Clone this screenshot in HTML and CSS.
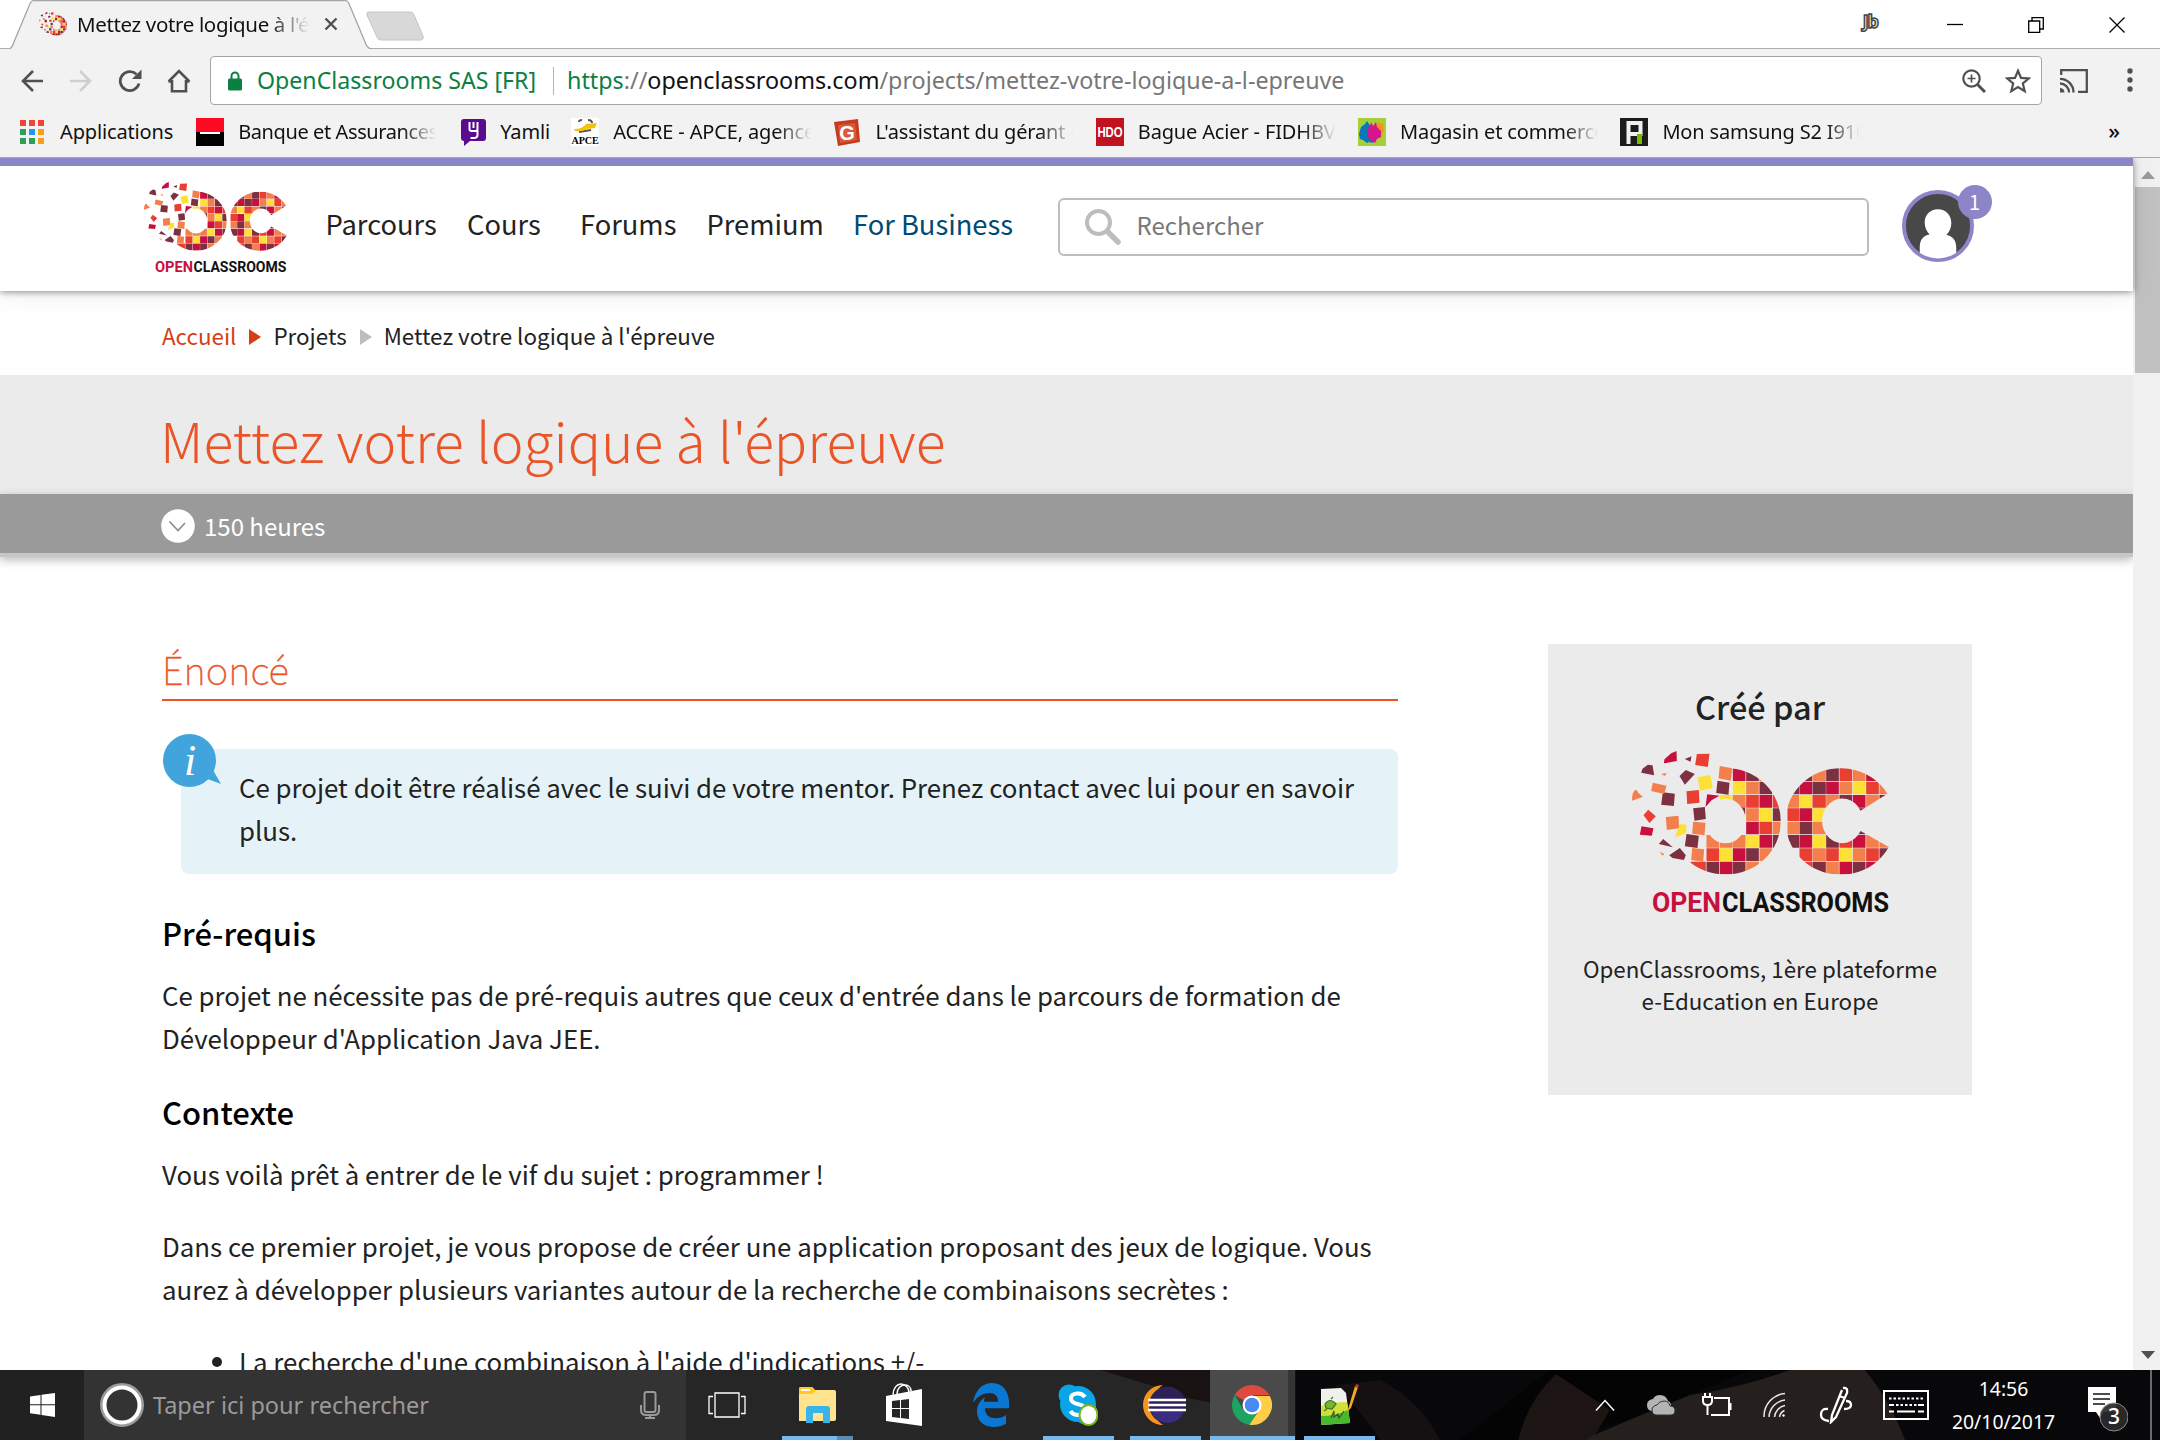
FILE: index.html
```html
<!DOCTYPE html>
<html lang="fr">
<head>
<meta charset="utf-8">
<title>Mettez votre logique à l'épreuve</title>
<link rel="stylesheet" href="styles.css">
</head>
<body>
<svg class="defs" width="0" height="0">
  <defs>
    <clipPath id="oShape"><path clip-rule="evenodd" d="M389 548a166 160 0 1 0 332 0a166 160 0 1 0-332 0zM494 547a61 67 0 1 0 122 0a61 67 0 1 0-122 0z"/></clipPath>
    <clipPath id="cShape"><path d="M1041 465A165 160 0 1 0 1045 625L960 577A61 67 0 1 1 960 516z"/></clipPath>
    <symbol id="oc-mark" viewBox="275 337 770 372">
      <g clip-path="url(#oShape)" stroke-width="38" fill="none">
        <path stroke="#c8103e" d="M577 408h38M657 488h38M617 568h38M657 608h38M577 648h38M538 688h38"/>
        <path stroke="#7d3040" d="M617 408h38M657 448h38M498 688h38M577 688h38M617 648h38M697 528h28M697 608h28M600 509h14"/>
        <path stroke="#ffe136" d="M577 448h38M538 488h38M657 528h38M617 608h38M538 648h38"/>
        <path stroke="#f37f4d" d="M617 448h38M577 488h38M498 608h38M538 608h38M577 608h38M617 528h38M697 568h28M657 648h38M617 688h38M657 408h38"/>
        <path stroke="#e93f32" d="M617 488h38M697 488h28M657 568h38M498 648h38M450 688h46"/>
      </g>
      <g clip-path="url(#cShape)" stroke-width="38" fill="none">
        <path stroke="#c8103e" d="M977 408h38M777 448h38M857 448h38M937 488h38M777 528h38M777 608h38M937 608h38M897 688h38M977 688h38"/>
        <path stroke="#7d3040" d="M777 408h38M857 408h38M741 448h35M816 448h40M897 488h38M1017 488h38M937 528h38M777 568h38M741 608h35M857 608h38M937 568h38M816 688h40M937 688h38M1017 648h38"/>
        <path stroke="#f37f4d" d="M816 408h40M937 408h38M897 448h38M1017 448h38M741 488h35M857 488h38M977 488h38M741 568h35M816 568h40M977 608h38M1017 608h38M816 648h40M937 648h38M857 688h38"/>
        <path stroke="#ffe136" d="M937 448h38M777 488h38M816 528h40M816 608h40M897 648h38"/>
        <path stroke="#e93f32" d="M897 408h38M977 448h38M816 488h40M741 528h35M897 608h38M777 648h38M857 648h38M977 648h38M777 688h38"/>
      </g>
      <path fill="#c8103e" d="M370 372l2-10 20-18 16-7 1 30-36 7zM500 467l37 4-24 14-18 20zM303 563l36 6-5 22-36-3z"/>
      <path fill="#7d3040" d="M302 402l4-12 16-12 14 2 5 30zM433 361l20-8-3 16zM436 394l27 12-30 32-16-26zM367 461l36 4-3 37-38-4zM531 426l36 6-3 36-37-5zM458 509l35-4 3 36-34 5zM438 586l37 5-4 37-38-5zM368 601l29 25-42-10zM418 628l18 22-6 14-34-6-10-8z"/>
      <path fill="#e93f32" d="M469 346l38-1-5 40-38-6zM438 458l37-4 2 38-37 4zM323 513l23 20-19 20-18-23z"/>
      <path fill="#f37f4d" d="M538 382l37 7-4 37-37-7zM337 432l41 9-7 25-39-9zM283 454q8-2 10 8l14 12-32 12q-2-20 8-32zM362 406l17-3-6 9zM376 535l38-4 2 38-37 5zM458 549l37 3-3 38-37-5zM455 628l36 4-3 37-36-5zM357 639l14 7-5 5z"/>
      <path fill="#ffe136" d="M471 416l38-7 8 39-38 8zM418 556l20 2-2 25-33 14z"/>
    </symbol>
  </defs>
</svg>

<header class="browser">
  <div class="tabstrip">
    <div class="tab">
      <svg class="tab-bg" width="362" height="50" viewBox="0 0 362 50"><path d="M0 49Q3 46 4 42L19 6Q21 0 25 .5H334Q338 0 340 6L355 42Q357 48 361 49" fill="#f2f2f2" stroke="#a5a5a5" stroke-width="1.3"/><path d="M0 49.6h362" stroke="#f2f2f2"/></svg>
      <svg class="tab-icon" width="28" height="24" viewBox="275 340 446 370" preserveAspectRatio="none"><use href="#oc-mark" x="275" y="337" width="770" height="372"/></svg>
      <span class="tab-title fade">Mettez votre logique à l'épreuve</span>
      <svg class="tab-close" width="14" height="14" viewBox="0 0 14 14"><path d="M1.500 1.500l11 11M12.500 1.500l-11 11" stroke="#505050" stroke-width="2.400"/></svg>
    </div>
    <svg class="newtab" width="60" height="30" viewBox="0 0 60 30"><path d="M3 1H44q3 0 4 3l9 21q1 4-3 4H15q-3 0-4-3L1 4q-1-3 2-3z" fill="#d8d8d8" stroke="#c4c4c4"/></svg>
    <div class="window-buttons">
      <span class="profile">Jb</span>
      <svg width="16" height="16" viewBox="0 0 16 16"><path d="M0 7.500h16" stroke="#000" stroke-width="1.300"/></svg>
      <svg width="16" height="16" viewBox="0 0 16 16" fill="none" stroke="#000" stroke-width="1.300"><path d="M.7 4h11v11.300h-11zM4 4V.7h11.300V12h-3.500"/></svg>
      <svg width="16" height="16" viewBox="0 0 16 16"><path d="M.5.5l15 15M15.500.5l-15 15" stroke="#000" stroke-width="1.300"/></svg>
    </div>
  </div>
  <div class="toolbar">
    <div class="nav-buttons">
      <svg width="24" height="24" viewBox="0 0 24 24" fill="none" stroke="#505050" stroke-width="2.600"><path d="M23 12H3M13 2L3 12l10 10"/></svg>
      <svg width="24" height="24" viewBox="0 0 24 24" fill="none" stroke="#cfcfcf" stroke-width="2.600"><path d="M1 12h20M11 2l10 10-10 10"/></svg>
      <svg width="24" height="24" viewBox="0 0 24 24"><path d="M21 14.500A9.500 9.500 0 1 1 18.500 5.300" fill="none" stroke="#505050" stroke-width="2.800"/><path d="M23.500.5V10h-9.500z" fill="#505050"/></svg>
      <svg width="24" height="24" viewBox="0 0 24 24" fill="none" stroke="#505050" stroke-width="2.600"><path d="M5 11v11.200h14V11M1.500 12.500h3.500M22.500 12.500H19M1.600 12.500L12 2l10.400 10.500"/></svg>
    </div>
    <div class="omnibox">
      <svg width="14" height="20" viewBox="0 0 14 20"><path d="M3.500 8V5a3.500 3.500 0 0 1 7 0v3" fill="none" stroke="#0b8043" stroke-width="2"/><rect y="7.500" width="14" height="12" rx="1.500" fill="#0b8043"/></svg>
      <span class="issuer">OpenClassrooms SAS [FR]</span>
      <span class="url"><span class="secure">https</span>://<span class="host">openclassrooms.com</span>/projects/mettez-votre-logique-a-l-epreuve</span>
      <svg class="zoom" width="24" height="24" viewBox="0 0 24 24" fill="none" stroke="#505050"><circle cx="9.500" cy="9.500" r="8.200" stroke-width="2.200"/><path d="M15.500 15.500l7.500 7.500" stroke-width="3"/><path d="M9.500 5.500v8M5.500 9.500h8" stroke-width="1.700"/></svg>
      <svg class="star" width="26" height="26" viewBox="0 0 26 26"><path d="M13 2.800l3 7.100 7.700.6-5.900 5 1.900 7.600-6.700-4.100-6.700 4.100 1.900-7.600-5.900-5 7.700-.6z" fill="none" stroke="#505050" stroke-width="2.200"/></svg>
    </div>
    <svg class="cast" width="28" height="24" viewBox="0 0 28 24" fill="none" stroke="#505050" stroke-width="2.300"><path d="M1.200 6V1.200h25.600v21.600H18M0 9.800A13.500 13.500 0 0 1 13.500 23.500M0 14.500a9 9 0 0 1 9 9"/><path d="M0 19a4.500 4.500 0 0 1 4.500 4.500H0z" fill="#505050" stroke="none"/></svg>
    <svg class="menu" width="6" height="24" viewBox="0 0 6 24" fill="#505050"><circle cx="3" cy="3" r="2.700"/><circle cx="3" cy="12" r="2.700"/><circle cx="3" cy="21" r="2.700"/></svg>
  </div>
  <div class="bookmarks">
    <div class="bookmark apps">
      <svg width="24" height="24" viewBox="0 0 24 24"><path fill="#f44336" d="M0 0h6v6H0zM9 0h6v6H9zM18 0h6v6h-6z"/><path fill="#2e9e5b" d="M0 9h6v6H0zM0 18h6v6H0zM9 18h6v6H9z"/><path fill="#2196f3" d="M9 9h6v6H9z"/><path fill="#f9a01b" d="M18 9h6v6h-6zM18 18h6v6h-6z"/></svg>
      <span>Applications</span>
    </div>
    <div class="bookmark bank">
      <svg width="28" height="28" viewBox="0 0 28 28"><path fill="#ff0a24" d="M0 0h28v14H0z"/><path d="M0 14h28v14H0z"/><path stroke="#fff" stroke-width="2" d="M4 15h20"/></svg>
      <span class="fade">Banque et Assurances</span>
    </div>
    <div class="bookmark short">
      <svg width="25" height="28" viewBox="0 0 25 28"><path fill="#5a0a8c" d="M3 1h19q3 0 3 3v16q0 3-3 3H9l-6 5V23q-3 0-3-3V4q0-3 3-3z"/><path d="M8.500 4v7q0 2 2 2h4q2 0 2-2V4M12.500 4v6M16.500 12v5q0 3-4 3h-3" fill="none" stroke="#fff" stroke-width="2"/></svg>
      <span>Yamli</span>
    </div>
    <div class="bookmark">
      <svg width="28" height="28" viewBox="0 0 28 28"><path fill="#fff" d="M0 0h28v28H0z"/><path d="M8 4q0-2 3-2M17 2q4 0 4 3M8 14l12-2" stroke="#555" stroke-width="2" fill="none"/><path d="M3 11q9 0 12-5l11-1-2 5-8 1q-4 3-12 2z" fill="#f4c20d"/><text x="14" y="26" text-anchor="middle" textLength="27" lengthAdjust="spacingAndGlyphs" class="ico-serif">APCE</text></svg>
      <span class="fade">ACCRE - APCE, agence</span>
    </div>
    <div class="bookmark">
      <svg width="28" height="28" viewBox="0 0 28 28"><path d="M1 4L25 1l2 23-22 4z" fill="#c63a1e"/><path d="M5 7l17-2 2 17-17 3z" fill="#d95a38"/><text x="14" y="22" text-anchor="middle" class="ico-g">G</text></svg>
      <span class="fade">L'assistant du gérant de</span>
    </div>
    <div class="bookmark">
      <svg width="28" height="28" viewBox="0 0 28 28"><path fill="#c1121f" d="M0 0h28v28H0z"/><text x="14" y="19" text-anchor="middle" textLength="25" lengthAdjust="spacingAndGlyphs" class="ico-hdo">HDO</text></svg>
      <span class="fade">Bague Acier - FIDHBVA</span>
    </div>
    <div class="bookmark">
      <svg width="28" height="28" viewBox="0 0 28 28"><path fill="#a6cf38" d="M0 0h28v28H0z"/><path d="M18 8l2-4 3 2 2-1 1 7-3 8-6-2z" fill="#f7941d"/><path d="M1 16l2-7 4-3 2-3 2 3 4 4v15l-4-1-2 1-4-3-3-1z" fill="#0b76bc"/><path d="M9 12l3-4 1-4 2 4 3-4 1 5 4 4 0 6-4 2-2 4-5-3-3-4z" fill="#d6158c"/></svg>
      <span class="fade">Magasin et commerce</span>
    </div>
    <div class="bookmark">
      <svg width="28" height="28" viewBox="0 0 28 28"><path fill="#1c1c1c" d="M0 0h28v28H0z"/><path d="M8.500 26V5h12v11h-10" fill="none" stroke="#f0f0f0" stroke-width="4"/><path fill="#7ab800" d="M17 16h5v10h-5z"/></svg>
      <span class="fade">Mon samsung S2 I9100</span>
    </div>
    <span class="overflow">»</span>
  </div>
</header>

<div class="viewport">
  <div class="page">
    <header class="site-header">
      <div class="logo small"><svg width="143" height="69"><use href="#oc-mark" width="143" height="69"/></svg><svg width="143" height="21" viewBox="0 0 143 21"><text x="11" y="20.500" textLength="38" lengthAdjust="spacingAndGlyphs" class="word open">OPEN</text><text x="49.500" y="20.500" textLength="93" lengthAdjust="spacingAndGlyphs" class="word">CLASSROOMS</text></svg></div>
      <nav class="site-nav"><a>Parcours</a><a>Cours</a><a>Forums</a><a>Premium</a><a class="business">For Business</a></nav>
      <div class="search"><svg width="36" height="36" viewBox="0 0 36 36" fill="none" stroke="#bdbdbd"><circle cx="13.500" cy="13.500" r="11.500" stroke-width="4"/><path d="M22.500 22.500l10.500 10.500" stroke-width="5.500" stroke-linecap="round"/></svg><span>Rechercher</span></div>
      <div class="avatar"><svg width="72" height="72" viewBox="0 0 73 73"><clipPath id="av"><circle cx="36.500" cy="36.500" r="33"/></clipPath><circle cx="36.500" cy="36.500" r="34.500" fill="#484848" stroke="#8c86c8" stroke-width="4"/><path clip-path="url(#av)" fill="#fff" d="M36.500 19.500c8 0 13.500 6 13.500 14 0 5-2 9-5 12 7 1 10 6 10 13v12H18V58c0-7 3-12 10-13-3-3-5-7-5-12 0-8 5.500-13.500 13.500-13.500z"/></svg><span class="count">1</span></div>
    </header>
    <div class="crumbs"><a class="home">Accueil</a><i class="arrow red"></i><a>Projets</a><i class="arrow"></i><span>Mettez votre logique à l'épreuve</span></div>
    <div class="title-band"><h1>Mettez votre logique à l'épreuve</h1></div>
    <div class="duration"><svg width="34" height="34" viewBox="0 0 34 34"><circle cx="17" cy="17" r="16.800" fill="#fff"/><path d="M8.500 12.500l8.500 9 7-7.500" fill="none" stroke="#8a8a8a" stroke-width="1.600"/></svg><span>150 heures</span></div>
    <div class="content">
      <main>
        <h2>Énoncé</h2>
        <div class="info">
          <svg class="bubble" width="59" height="54" viewBox="0 0 59 54"><circle cx="26.500" cy="26.500" r="26.500" fill="#41a4dc"/><path d="M42 44l16 6-8-14z" fill="#41a4dc"/><text x="27" y="41" text-anchor="middle" class="i">i</text></svg>
          Ce projet doit être réalisé avec le suivi de votre mentor. Prenez contact avec lui pour en savoir plus.
        </div>
        <h3>Pré-requis</h3>
        <p>Ce projet ne nécessite pas de pré-requis autres que ceux d'entrée dans le parcours de formation de Développeur d'Application Java JEE.</p>
        <h3 class="next">Contexte</h3>
        <p>Vous voilà prêt à entrer de le vif du sujet : programmer !</p>
        <p class="more">Dans ce premier projet, je vous propose de créer une application proposant des jeux de logique. Vous aurez à développer plusieurs variantes autour de la recherche de combinaisons secrètes :</p>
        <ul><li>La recherche d'une combinaison à l'aide d'indications +/-</li></ul>
      </main>
      <aside>
        <h4>Créé par</h4>
        <div class="logo"><svg width="257" height="124"><use href="#oc-mark" width="257" height="124"/></svg><svg width="257" height="38" viewBox="0 0 257 38"><text x="20" y="37" textLength="69" lengthAdjust="spacingAndGlyphs" class="word open">OPEN</text><text x="90" y="37" textLength="167" lengthAdjust="spacingAndGlyphs" class="word">CLASSROOMS</text></svg></div>
        <p>OpenClassrooms, 1ère plateforme<br>e-Education en Europe</p>
      </aside>
    </div>
  </div>
  <div class="scrollbar">
    <svg width="14" height="8" viewBox="0 0 14 8"><path d="M0 8l7-8 7 8z" fill="#9b9b9b"/></svg>
    <div class="thumb"></div>
    <svg class="down" width="14" height="8" viewBox="0 0 14 8"><path d="M0 0l7 8 7-8z" fill="#505050"/></svg>
  </div>
</div>

<footer class="taskbar">
  <svg class="wallpaper" width="2160" height="70" viewBox="0 0 2160 70"><path fill="#262626" d="M0 0h1160v70H0z"/><path fill="#191213" d="M1100 0h260l50 70h-230l-20-52z"/><path fill="#262626" d="M1088 0q60 22 120 32 40 20 60 38h-180z"/><path fill="#08080a" d="M1296 0h864v70h-864z"/><path fill="#151011" d="M1335 15q30 30 45 55h60q-20-40-60-60z"/><path fill="#040405" d="M1460 70l90-70h200l-120 50-80 20z"/><path fill="#1d1514" d="M1518 70q10-40 38-66l54 36-18 30z"/><path fill="#251f1d" d="M1592 66Q1640 45 1690 25 1740 18 1790 0h75q25 30 40 70H1585z"/></svg>
  <div class="start"><svg width="25" height="24" viewBox="0 0 25 24" fill="#fff"><path d="M0 3.500L10.500 2v9.300H0zM11.500 1.800L25 0v11.300H11.500zM0 12.300h10.500v9.400L0 20.300zM11.500 12.300H25V24l-13.500-2z"/></svg></div>
  <div class="task-search">
    <svg width="44" height="44" viewBox="0 0 44 44" fill="none"><circle cx="22" cy="22" r="20.500" stroke="#9a9a9a" stroke-width="3"/><circle cx="22" cy="22" r="17.500" stroke="#fff" stroke-width="4"/></svg>
    <span>Taper ici pour rechercher</span>
    <svg class="mic" width="20" height="28" viewBox="0 0 20 28" fill="none" stroke="#9a9a9a" stroke-width="2"><rect x="4.500" y="1" width="11" height="20" rx="2"/><path d="M1 14v5q0 5 5 5h8q5 0 5-5v-5M10 24v3M5 27h10"/></svg>
  </div>
  <div class="task-view"><svg width="38" height="26" viewBox="0 0 38 26" fill="none" stroke="#fff" stroke-width="1.300"><path d="M7 1h24v24H7zM5 4.500H1v17h4M33 4.500h4v17h-4"/></svg></div>
  <div class="app multi"><svg width="38" height="38" viewBox="0 0 38 38"><path d="M1 3q0-2 2-2h11l3 3h19q2 0 2 2v27q0 2-2 2H1z" fill="#ffe38e"/><path d="M1 3q0-2 2-2h11l4 4-4 3H1z" fill="#fdc727"/><path d="M3 4h9" stroke="#fff" stroke-width="2"/><path d="M8 37V23q0-3 3-3h18q3 0 3 3v14h-7V27H15v10z" fill="#37b5ea"/></svg></div>
  <div class="app"><svg width="40" height="44" viewBox="0 0 40 44"><path d="M2 13l36-7v37L2 38z" fill="#fff"/><path d="M9 12C9 5 13 1 17 1s8 4 8 8M13 11c0-6 4-9 8-9 4 0 6 3 6 6" fill="none" stroke="#fff" stroke-width="1.500"/><path fill="#262626" d="M8 18l8-1v8H8zM17 17l8-1v9h-8zM8 26h8v9l-8-1zM17 26h8v10l-8-1z"/></svg></div>
  <div class="app"><svg width="36" height="44" viewBox="0 0 36 40" preserveAspectRatio="none"><path d="M0 18C2 7 9 0 19 0c11 0 17 8 17 18v5H12c0 7 5 9 11 9 4 0 7-1 10-3v8c-4 2-8 3-13 3C10 40 4 34 4 26c0-6 3-10 8-13-1 2-1 3-1 4h14c0-5-3-8-9-8C9 9 4 13 0 18z" fill="#0a78d3"/></svg></div>
  <div class="app running"><svg width="40" height="42" viewBox="0 0 40 42"><circle cx="20" cy="20" r="18" fill="#0aa5e6"/><circle cx="11" cy="11" r="10.500" fill="#0aa5e6"/><circle cx="27" cy="28" r="12" fill="#0aa5e6"/><path d="M27 13q-3-4-8-3.500-6 .5-6 5 0 4 6.500 5.500 8 1.500 8 6t-7 5q-6 0-8-4" fill="none" stroke="#fff" stroke-width="4"/><ellipse cx="30.500" cy="31" rx="9" ry="10" fill="#fff" stroke="#7ab51d" stroke-width="2"/></svg></div>
  <div class="app running"><svg width="44" height="42" viewBox="0 0 44 42"><path d="M20 1A20 20 0 0 0 20 41A24 24 0 0 1 20 1z" fill="#f7941e"/><circle cx="24.500" cy="21" r="18.500" fill="#2c2255"/><path d="M8 27h33q-5 12-16 12T8 27z" fill="#3b2c80"/><path d="M5 16h38M5 21h38M5 26h38" stroke="#fff" stroke-width="2.400"/></svg></div>
  <div class="app active"><svg width="40" height="40" viewBox="0 0 40 40"><path d="M20 20L2.700 10A20 20 0 0 1 37.300 10H20z" fill="#dd4b3e"/><path d="M20 20l-8.700 5L2.700 10A20 20 0 0 0 18 40l7-12z" fill="#1da362"/><path d="M20 11h17.800A20 20 0 0 1 17.500 39.800L28 24z" fill="#ffcd46"/><circle cx="20" cy="20" r="9.500" fill="#fff"/><circle cx="20" cy="20" r="7.300" fill="#4a8af5"/></svg></div>
  <div class="app running"><svg width="40" height="42" viewBox="0 0 40 42"><path d="M2 5l20-1 5 5 4 30-29 2z" fill="#f1f1ec"/><path d="M2 27q14-1 27-4l2 16-29 2z" fill="#48b82c"/><path d="M2 22q12-4 26-4l1 8q-12 6-27 6z" fill="#cfe03a"/><path d="M6 20q5-7 11 0l-4 5-6-1zM12 15l2-2M8 25l-3 2" fill="#79b52c" stroke="#3b7423" stroke-width="1.200"/><path d="M12 34l3-7v6l4-3 1 4 5-7" fill="none" stroke="#3b5a20" stroke-width="1.200"/><path d="M28 28l2-6L36 2l3 1-7 21z" fill="#f5a623"/><path d="M36 3l1-3 3 1-1 3z" fill="#c0392b"/></svg></div>
  <div class="tray">
    <div class="w56"><svg width="20" height="12" viewBox="0 0 20 12"><path d="M1 11.500L10 1.500l9 10" fill="none" stroke="#fff" stroke-width="1.500"/></svg></div>
    <div class="w56"><svg width="30" height="22" viewBox="0 0 30 22"><path d="M7 17q-6 0-6-6 0-5 6-6 2-4 7-4 6 0 8 6 3 1 3 5v5z" fill="#b4b4b4"/><path d="M11 21q-5 0-5-5 0-4 5-5 2-4 7-4 5 0 6 5 5 0 5 5 0 4-4 4z" fill="#b4b4b4" stroke="#333" stroke-width="1"/></svg></div>
    <div class="w56"><svg width="30" height="26" viewBox="0 0 30 26" fill="none" stroke="#fff" stroke-width="2"><path d="M12 6h15v17H9M28.500 11v7"/><path d="M3 1v5M8 1v5M5.500 13v10"/><path d="M1 5h9v4q0 4-4.500 4T1 9z"/></svg></div>
    <div class="w60"><svg width="24" height="26" viewBox="0 0 24 26" fill="none" stroke="#e8e8e8" stroke-width="1.500"><path d="M1 25A23 23 0 0 1 22 1.500M6 25A18 18 0 0 1 22 8M11.500 25A13 13 0 0 1 22 13.500M16.500 25q1-5 5-6.500"/><circle cx="20.500" cy="23.500" r="1.200" fill="#fff" stroke="none"/></svg></div>
    <div class="w62"><svg width="34" height="38" viewBox="0 0 34 38" fill="none" stroke="#fff" stroke-width="2.300"><path d="M24 2q5-1 4 5L17 31l-5 5 1-7L23 4M20 10l6 2"/><path d="M9 23q-7-1-7 6 0 5 8 6M27 15q5 0 5 4t-7 4"/></svg></div>
    <div class="w78"><svg width="46" height="30" viewBox="0 0 46 30" fill="none" stroke="#fff" stroke-width="2"><path d="M1 1h44v28H1z"/><path d="M6 8.500h35M13 15h22" stroke-dasharray="2.500 2"/><path d="M6 15h5M35 15h6M6 21.500h5M14 21.500h18M35 21.500h6"/></svg></div>
    <div class="clock"><span>14:56</span><span>20/10/2017</span></div>
    <div class="notif"><svg width="44" height="50" viewBox="0 0 44 50"><path d="M4 2h28v25H20l-4 6-4-6H4z" fill="#fff"/><path d="M9 9h17M9 14h17M9 19h12" stroke="#111" stroke-width="1.600"/><circle cx="30" cy="32" r="14" fill="#2b2b2b" fill-opacity=".93" stroke="#8b8b8b"/><text x="30" y="39" text-anchor="middle" class="three">3</text></svg></div>
    <div class="desk"></div>
  </div>
</footer>
</body>
</html>
```
FILE: styles.css
```css
* { box-sizing: border-box; margin: 0; padding: 0; }
body { width: 2160px; height: 1440px; overflow: hidden; display: flex; flex-direction: column; background: #fff; color: #222; font-family: "Noto Sans CJK SC", "Noto Sans", sans-serif; }
svg { display: block; flex: none; }
.defs { position: absolute; }
h1, h2, h3, h4 { font-weight: 500; }

/* browser chrome */
.browser { flex: none; height: 158px; background: #f2f2f2; border-bottom: 1px solid #a9a9a9; font-family: "Noto Sans", sans-serif; color: #111; }
.tabstrip { height: 49px; background: #fff; border-bottom: 1px solid #adadad; display: flex; align-items: flex-start; padding-left: 10px; }
.tab { position: relative; width: 362px; height: 50px; display: flex; align-items: center; padding: 0 0 2px 29px; }
.tab-bg { position: absolute; left: 0; top: 0; }
.tab-icon { position: relative; overflow: hidden; }
.tab-title { position: relative; width: 232px; margin-left: 10px; font-size: 20.5px; letter-spacing: -.35px; }
.tab-close { position: relative; margin-left: 15px; }
.fade { overflow: hidden; white-space: nowrap; -webkit-mask-image: linear-gradient(to right, #000 83%, transparent); mask-image: linear-gradient(to right, #000 83%, transparent); }
.newtab { margin: 11px 0 0 -6px; }
.window-buttons { margin-left: auto; display: flex; align-items: center; height: 49px; padding-right: 35px; gap: 65px; }
.profile { font-size: 18px; font-weight: 700; letter-spacing: -1px; color: #eee; -webkit-text-stroke: 1.500px #444; margin: 0 4px 8px 0; line-height: 24px; }
.toolbar { height: 60px; padding-top: 7px; display: flex; align-items: flex-start; }
.nav-buttons { display: flex; height: 49px; align-items: center; gap: 25px; padding: 0 19px 0 20px; }
.omnibox { width: 1832px; height: 49px; border: 1px solid #a5a5a5; border-radius: 4px; background: #fff; display: flex; align-items: center; padding: 0 10px 0 17px; font-size: 23.150px; white-space: nowrap; }
.issuer { margin-left: 15px; color: #0b8043; width: 297px; height: 28px; line-height: 26px; border-right: 1px solid #b5b5b5; }
.url { margin-left: 13px; color: #777; font-size: 23.300px; line-height: 28px; padding-bottom: 1px; }
.url .secure { color: #0b8043; }
.url .host { color: #111; }
.zoom { margin-left: auto; }
.star { margin-left: 19px; }
.cast { margin: 13px 0 0 18px; }
.menu { margin: 12px 0 0 39px; }
.bookmarks { height: 48px; display: flex; align-items: center; padding: 0 40px 3px 20px; font-size: 20px; letter-spacing: -.15px; }
.bookmark { width: 262.300px; flex: none; display: flex; align-items: center; gap: 14.200px; }
.bookmark .fade { width: 198px; line-height: 30px; }
.bookmark.apps { width: 176px; gap: 16px; }
.bookmark.bank { width: 265px; letter-spacing: -.4px; }
.bookmark.short { width: 110px; }
.overflow { margin-left: auto; font-size: 22px; line-height: 24px; font-weight: 500; padding-bottom: 4px; }
.ico-serif { font: bold 11px "Liberation Serif", serif; }
.ico-g { font: bold 20px "Liberation Sans", sans-serif; fill: #fff; }
.ico-hdo { font: bold 14px "Liberation Sans", sans-serif; fill: #fff; }

/* page */
.viewport { height: 1212px; display: flex; overflow: hidden; }
.page { width: 2133px; }
.site-header { position: relative; z-index: 2; height: 133px; background: #fff; border-top: 8px solid #8c86c8; padding: 0 0 3px 144px; display: flex; align-items: center; box-shadow: 0 1px 7px rgba(0,0,0,.45), 0 4px 30px rgba(0,0,0,.06); }
.word { font: 700 15.500px Roboto, sans-serif; fill: #111; }
aside .word { font-size: 28px; }
.word.open { fill: #c8103e; }
.site-nav { display: grid; grid-template-columns: 141.500px 113px 126.500px 146.500px 204.500px; margin-left: 38.500px; padding-bottom: 8px; font-size: 27.300px; white-space: nowrap; }
.site-nav .business { color: #004a75; }
.search { width: 811px; height: 58px; border: 2px solid #bdbdbd; border-radius: 6px; display: flex; align-items: center; padding-left: 25px; color: #777; font-size: 24px; }
.search span { margin-left: 16px; padding-bottom: 5px; }
.avatar { position: relative; margin-left: 33px; padding-bottom: 2px; }
.count { position: absolute; left: 56px; top: -5px; width: 34px; height: 34px; border-radius: 50%; background: #8c86c8; color: #fff; font-size: 20px; line-height: 33px; text-align: center; }
.crumbs { height: 84px; padding: 4px 0 0 162px; display: flex; align-items: center; font-size: 22.400px; }
.crumbs .home { color: #d53f14; }
.arrow { border: 8px solid transparent; border-left: 12px solid #bdbdbd; border-right: 0; margin: 4px 12px 0 13px; }
.arrow.red { border-left-color: #d53f14; }
.title-band { height: 119px; background: #ebebeb; padding: 8px 0 0 160px; display: flex; align-items: center; }
.title-band h1 { font-size: 55.200px; font-weight: 300; line-height: 80px; color: #ea5427; }
.duration { height: 63px; background: #9a9a9a; border-bottom: 4px solid #c6c6c6; padding: 5px 0 0 161px; display: flex; align-items: center; color: #fff; font-size: 24px; box-shadow: 0 3px 9px rgba(0,0,0,.28); }
.duration span { margin-left: 9px; padding-bottom: 2px; }
.content { display: flex; align-items: flex-start; padding: 87px 0 0 162px; }
main { width: 1236px; font-size: 25.830px; line-height: 43px; }
h2 { font-size: 38.300px; font-weight: 100; line-height: 48px; padding: 1px 0 6px; border-bottom: 2px solid #ea5427; color: #ea5427; -webkit-text-stroke: .4px #ea5427; }
.info { position: relative; margin: 48px 0 0 19px; height: 125px; background: #e5f3f9; border-radius: 8px; padding: 16px 25px 23px 58px; }
.bubble { position: absolute; left: -18.500px; top: -15.500px; }
.i { font: italic 44px "Liberation Serif", serif; fill: #fff; }
h3 { margin-top: 37px; font-size: 31px; line-height: 44px; color: #000; }
h3.next { margin-top: 31px; }
main p { margin-top: 18px; }
main p.more, ul { margin-top: 29px; }
ul { padding-left: 77px; }
aside { width: 424px; height: 451px; margin-left: 150px; background: #ebebeb; padding-top: 38px; display: flex; flex-direction: column; align-items: center; text-align: center; }
aside h4 { font-size: 32.500px; line-height: 48px; }
aside .logo { margin-top: 21px; }
aside p { margin-top: 39px; font-size: 22.350px; line-height: 32px; white-space: nowrap; }
.scrollbar { width: 27px; background: #f1f1f1; display: flex; flex-direction: column; align-items: center; padding: 13px 0 11px 2px; }
.thumb { width: 25px; height: 186px; background: #c1c1c1; margin-top: 8px; }
.scrollbar .down { margin-top: auto; }

/* taskbar */
.taskbar { position: relative; height: 70px; display: flex; background: #08080a; font-family: "Noto Sans", sans-serif; }
.taskbar > div { position: relative; display: flex; align-items: center; flex: none; }
.wallpaper { position: absolute; left: 0; top: 0; }
.start { width: 84px; justify-content: center; background: #212121; }
.task-search { width: 602px; background: #333; padding: 0 26px 0 16px; color: #9a9a9a; font-size: 23.500px; }
.task-search span { margin-left: 9px; }
.mic { margin-left: auto; }
.task-view { width: 88px; padding-left: 22px; }
.app { width: 87px; justify-content: center; }
.app svg { margin-right: 2px; }
.running::after, .multi::after, .active::after { content: ""; position: absolute; bottom: 0; left: 8px; width: 71px; height: 4px; background: #76b9ed; }
.multi::after { background: linear-gradient(to right, #76b9ed 55px, #5a8cb5 55px); }
.active::before { content: ""; position: absolute; left: 1px; top: 0; width: 85px; height: 70px; background: linear-gradient(to right, #4a4a4a 78px, #353535 78px); }
.active svg { position: relative; }
.active::after { left: 1px; width: 85px; }
.tray { margin-left: auto; color: #fff; }
.tray > div { height: 70px; display: flex; align-items: center; justify-content: center; }
.w56 { width: 56px; }
.w60 { width: 60px; }
.w62 { width: 62px; }
.w78 { width: 78px; }
.tray .clock { width: 117px; flex-direction: column; font-size: 19.400px; line-height: 33px; padding-top: 0; }
.notif { width: 88px; padding-top: 10px; }
.three { font: 500 21px "Noto Sans", sans-serif; fill: #fff; }
.tray .desk { width: 10px; border-left: 2px solid #6a6a6a; }
```
